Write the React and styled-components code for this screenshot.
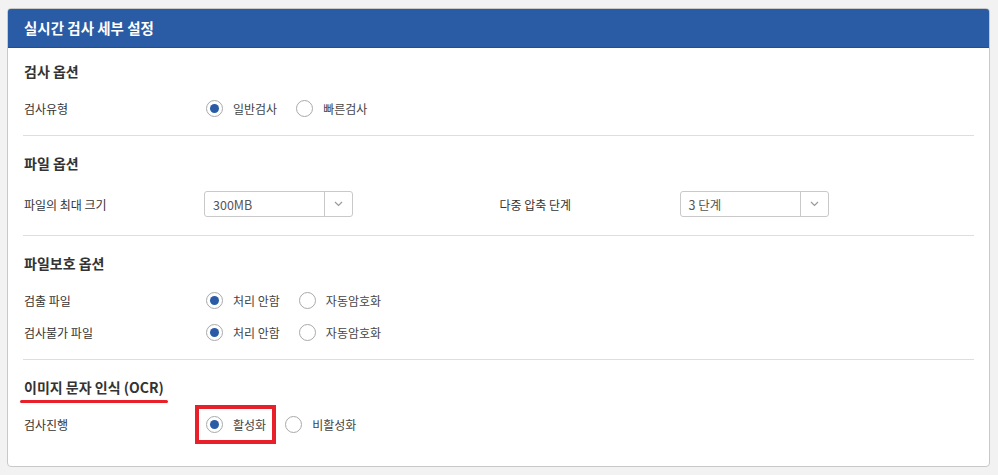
import React from "react";
import styled, { createGlobalStyle } from "styled-components";

const GlobalStyle = createGlobalStyle`
  html, body {
    margin: 0;
    padding: 0;
    background: #f2f2f2;
  }
  body {
    font-family: "Noto Sans CJK KR", "Noto Sans", sans-serif;
    color: #333;
  }
`;

const Page = styled.div`
  padding: 8px 8px 0 7px;
`;

const Panel = styled.div`
  width: 983px;
  box-sizing: border-box;
  background: #fff;
  border: 1px solid #c8c8c8;
  border-radius: 4px;
  overflow: hidden;
`;

const Header = styled.div`
  height: 40px;
  box-sizing: border-box;
  margin: -1px -1px 0;
  padding: 0 16px 1px;
  display: flex;
  align-items: center;
  background: #2a5ba5;
  border: 1px solid #22508f;
  border-radius: 4px 4px 0 0;
  color: #fff;
  font-size: 14.5px;
  font-weight: 700;
`;

const Body = styled.div`
  padding: 0 15px 15px;
`;

const Section = styled.div`
  padding: ${(p) => (p.first ? "13px" : "17px")} 0 11px;
  border-top: ${(p) => (p.first ? "none" : "1px solid #dedede")};
`;

const Title = styled.div`
  position: relative;
  width: fit-content;
  height: 20px;
  line-height: 20px;
  font-size: 14px;
  font-weight: 700;
  color: #333;
  margin-bottom: 11px;
  padding-left: 1px;
`;

const Underline = styled.span`
  position: absolute;
  left: -3px;
  right: -4px;
  bottom: -6px;
  height: 3px;
  border-radius: 2px;
  background: #e8202a;
`;

const Row = styled.div`
  display: flex;
  align-items: center;
  height: ${(p) => (p.tall ? "40px" : "32px")};
`;

const Field = styled.div`
  display: flex;
  align-items: center;
  width: 479px;
`;

const Label = styled.div`
  width: 180px;
  padding-left: 1px;
  font-size: 12px;
  color: #333;
`;

const Options = styled.div`
  display: flex;
  align-items: center;
  gap: 19px;
`;

const Option = styled.label`
  position: relative;
  display: flex;
  align-items: center;
  gap: 10px;
  font-size: 12px;
  color: #444;
  margin-left: ${(p) => (p.first ? "2px" : "0")};
`;

const Circle = styled.span`
  width: 17px;
  height: 17px;
  box-sizing: border-box;
  border-radius: 50%;
  border: 1px solid #a9a9a9;
  display: flex;
  align-items: center;
  justify-content: center;
  background: #fff;

  &::after {
    content: "";
    width: 9px;
    height: 9px;
    border-radius: 50%;
    background: ${(p) => (p.checked ? "#2a5ba5" : "transparent")};
  }
`;

const Highlight = styled.span`
  position: absolute;
  left: -11px;
  right: -10px;
  top: -11px;
  bottom: -11px;
  border: 4px solid #e8202a;
`;

const Select = styled.div`
  width: 149px;
  height: 26px;
  box-sizing: border-box;
  border: 1px solid #c9c9c9;
  border-radius: 3px;
  display: flex;
  align-items: stretch;
  font-size: 12.5px;
  color: #555;
`;

const SelectValue = styled.div`
  flex: 1;
  display: flex;
  align-items: center;
  padding-left: 8px;
`;

const SelectArrow = styled.div`
  width: 27px;
  border-left: 1px solid #c9c9c9;
  display: flex;
  align-items: center;
  justify-content: center;
`;

const Radio = ({ checked, first, highlight, children }) => (
  <Option first={first}>
    <Circle checked={checked} />
    {children}
    {highlight && <Highlight />}
  </Option>
);

const Dropdown = ({ value }) => (
  <Select>
    <SelectValue>{value}</SelectValue>
    <SelectArrow>
      <svg width="9" height="6" viewBox="0 0 9 6">
        <path d="M1 1l3.5 3.5L8 1" fill="none" stroke="#9a9a9a" strokeWidth="1.2" />
      </svg>
    </SelectArrow>
  </Select>
);

const RadioRow = ({ label, options, selected = 0, highlight }) => (
  <Row>
    <Label>{label}</Label>
    <Options>
      {options.map((o, i) => (
        <Radio key={o} first={i === 0} checked={i === selected} highlight={highlight && i === selected}>
          {o}
        </Radio>
      ))}
    </Options>
  </Row>
);

export default function App() {
  return (
    <Page>
      <GlobalStyle />
      <Panel>
        <Header>실시간 검사 세부 설정</Header>
        <Body>
          <Section first>
            <Title>검사 옵션</Title>
            <RadioRow label="검사유형" options={["일반검사", "빠른검사"]} />
          </Section>
          <Section>
            <Title>파일 옵션</Title>
            <Row tall>
              <Field>
                <Label>파일의 최대 크기</Label>
                <Dropdown value="300MB" />
              </Field>
              <Field>
                <Label>다중 압축 단계</Label>
                <Dropdown value="3 단계" />
              </Field>
            </Row>
          </Section>
          <Section>
            <Title>파일보호 옵션</Title>
            <RadioRow label="검출 파일" options={["처리 안함", "자동암호화"]} />
            <RadioRow label="검사불가 파일" options={["처리 안함", "자동암호화"]} />
          </Section>
          <Section>
            <Title>
              이미지 문자 인식 (OCR)
              <Underline />
            </Title>
            <RadioRow label="검사진행" options={["활성화", "비활성화"]} highlight />
          </Section>
        </Body>
      </Panel>
    </Page>
  );
}
